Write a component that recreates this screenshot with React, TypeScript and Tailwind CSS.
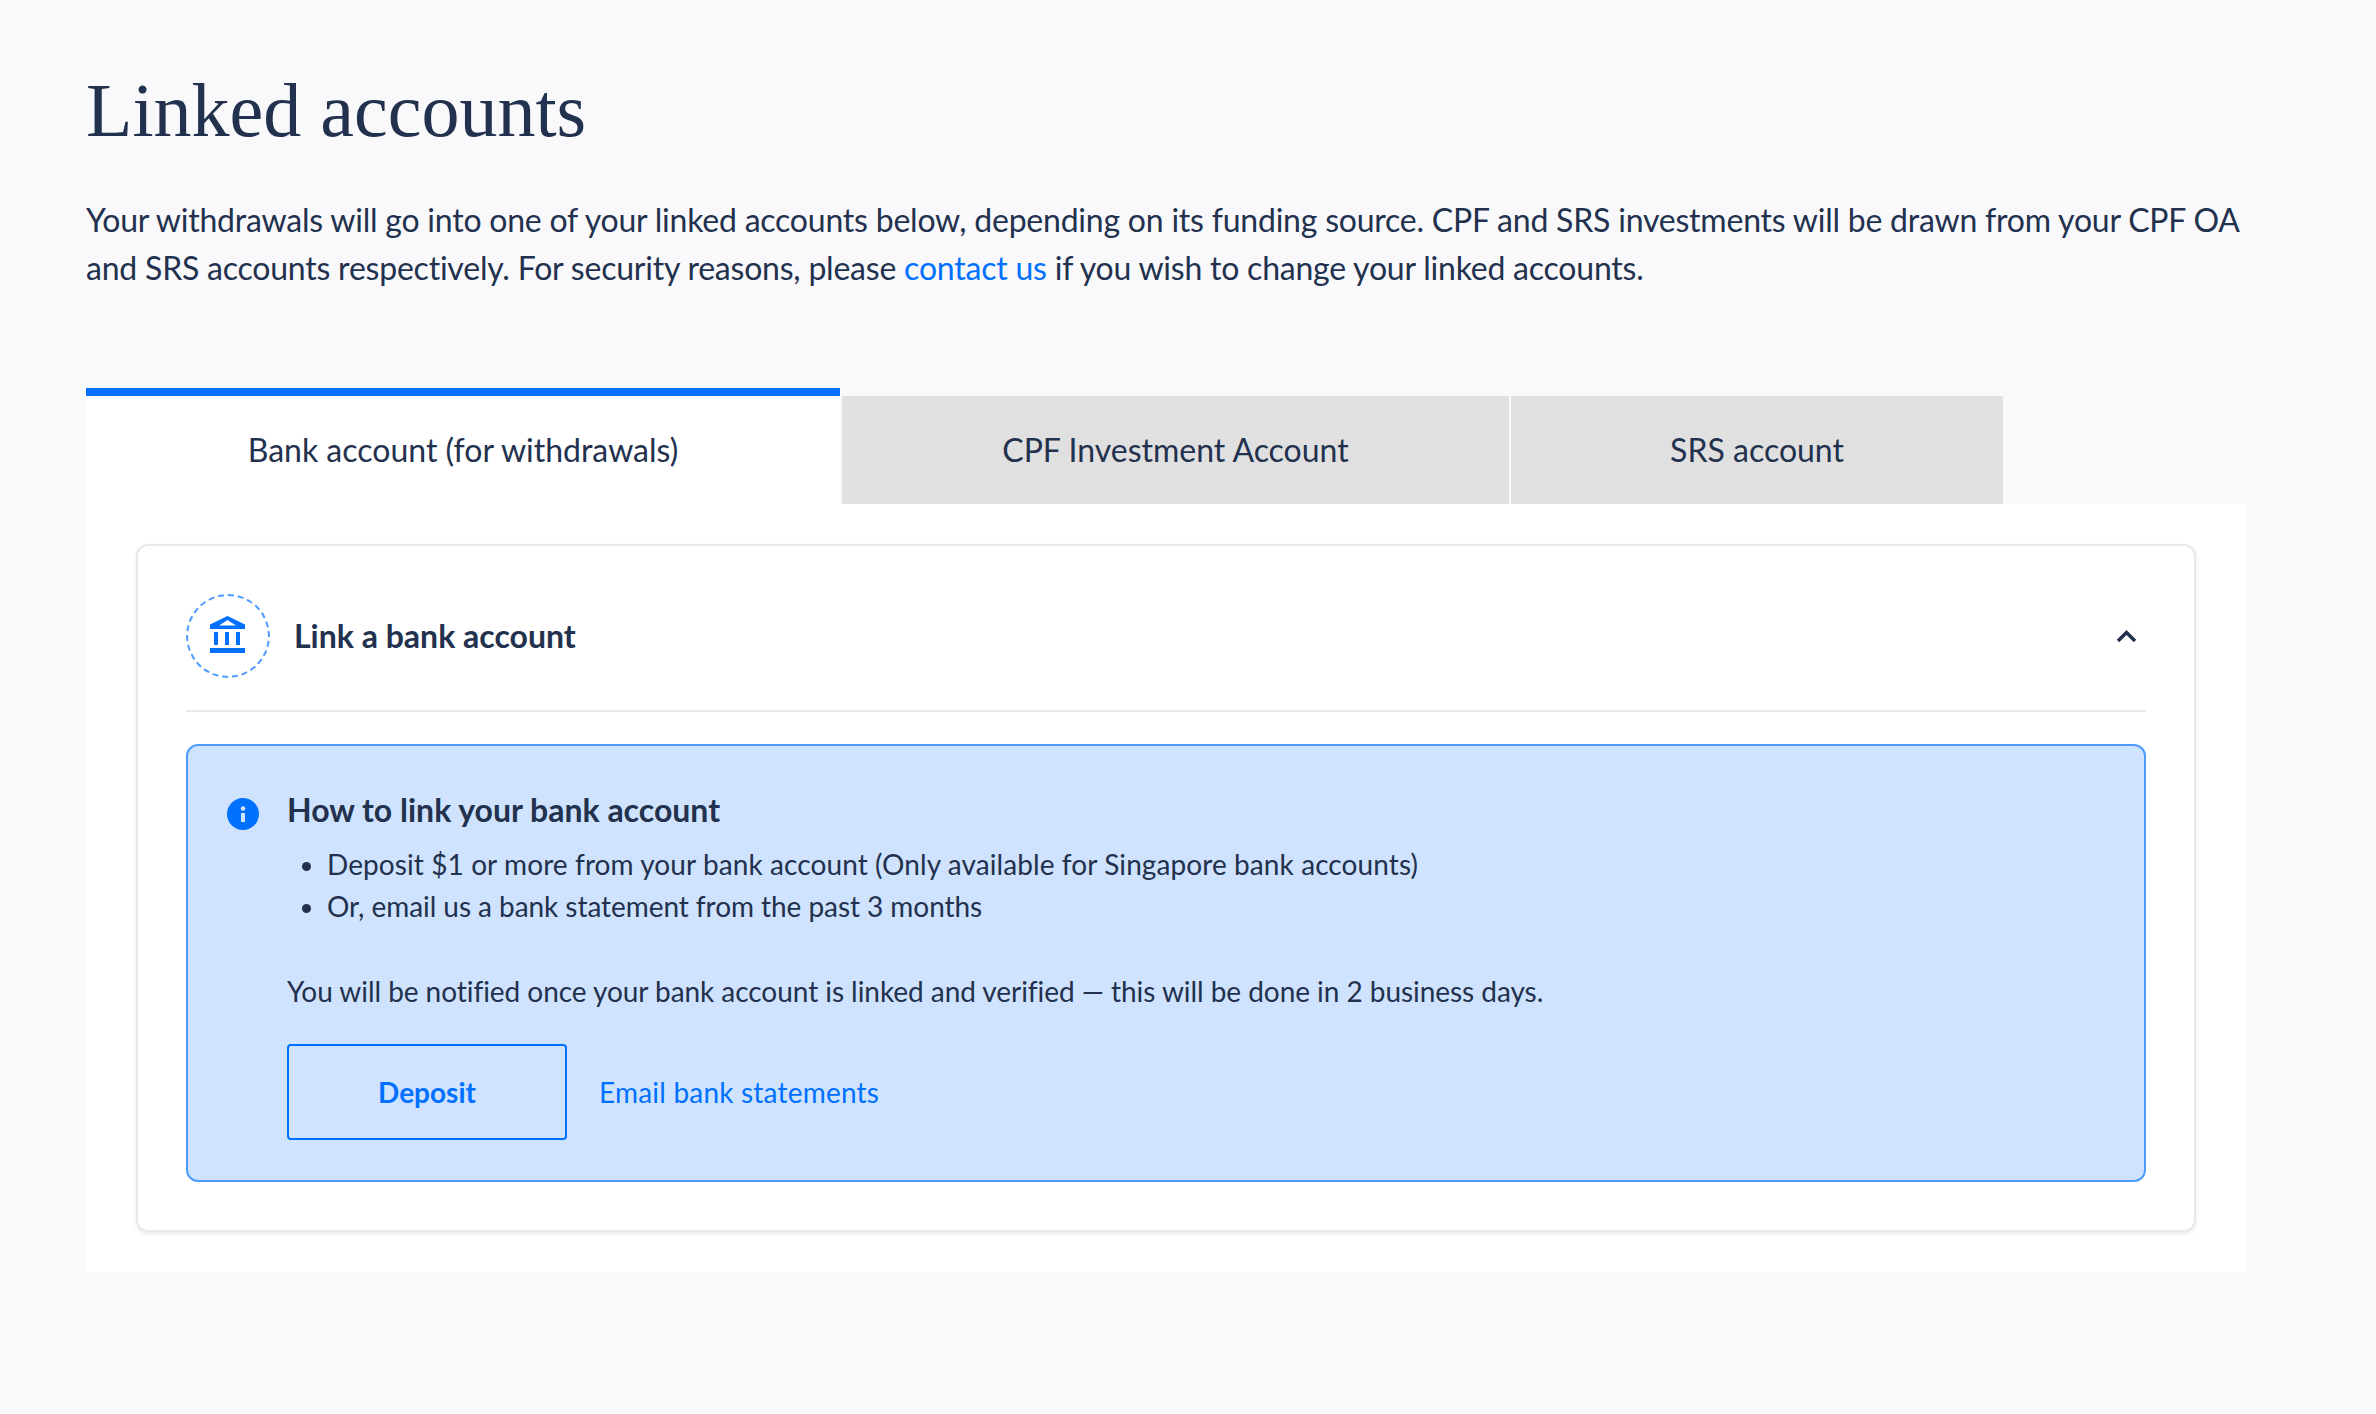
function BankIcon() {
  return (
    <div className="flex h-[84px] w-[84px] shrink-0 items-center justify-center rounded-full border-2 border-dashed border-[#4d9bff]">
      <svg width="35" height="37" viewBox="0 0 35 37" fill="#0070ff" className="mb-[3px] mr-[1px]">
        <path fillRule="evenodd" d="M17.500 0 35 8.500V13H0V8.500zM17.500 4 9 9.500h17z" />
        <path d="M4 16h4v13H4zM15 16h4v13h-4zM26 16h4v13h-4zM0 32h35v5H0z" />
      </svg>
    </div>
  );
}

function InfoIcon() {
  return (
    <svg width="32" height="32" viewBox="0 0 32 32" className="ml-[1px] mr-[28px] mt-[8px] shrink-0">
      <circle cx="16" cy="16" r="16" fill="#0070ff" />
      <circle cx="16" cy="10.500" r="2.300" fill="#cfe3fe" />
      <rect x="14" y="15" width="4" height="9" fill="#cfe3fe" />
    </svg>
  );
}

export default function App() {
  return (
    <div className="min-h-[1414px] bg-[#f9f9fc] px-[86px] pt-[62px] font-['Lato',sans-serif] text-[#22314d]">
      <h1 className="font-['Liberation_Serif',serif] text-[76px] leading-[96px]">Linked accounts</h1>
      <p className="mt-[38px] w-[2170px] text-[32px] leading-[48px] tracking-[-0.22px]">
        Your withdrawals will go into one of your linked accounts below, depending on its funding source. CPF and SRS
        investments will be drawn from your CPF OA and SRS accounts respectively. For security reasons, please{' '}
        <span className="text-[#0070ff]">contact us</span> if you wish to change your linked accounts.
      </p>

      <div className="mt-[96px] flex items-end text-[32px]">
        <div className="flex h-[116px] w-[754px] items-center justify-center border-t-[8px] border-[#0070ff] bg-white">
          Bank account (for withdrawals)
        </div>
        <div className="ml-[2px] flex h-[108px] w-[667px] items-center justify-center bg-[#e0e0e0]">
          CPF Investment Account
        </div>
        <div className="ml-[2px] flex h-[108px] w-[492px] items-center justify-center bg-[#e0e0e0]">SRS account</div>
      </div>

      <div className="w-[2160px] bg-white px-[50px] pb-[40px] pt-[40px]">
        <div className="rounded-xl border-2 border-[#e8e8ee] bg-white p-[48px] shadow-[0_2px_4px_rgba(0,0,0,0.08)]">
          <div className="flex items-center justify-between border-b-2 border-[#e8e8ee] pb-[32px]">
            <div className="flex items-center gap-[24px]">
              <BankIcon />
              <span className="text-[32px] font-bold">Link a bank account</span>
            </div>
            <svg width="19" height="12" viewBox="0 0 19 12" fill="none" stroke="#22314d" strokeWidth="3.500" className="mr-[10px]">
              <path d="M1 11 9.500 2.500 18 11" />
            </svg>
          </div>

          <div className="mt-[32px] flex rounded-xl border-2 border-[#4d9bff] bg-[#cfe3fe] px-[38px] pb-[40px] pt-[44px]">
            <InfoIcon />
            <div>
              <h2 className="text-[32px] font-bold leading-[40px]">How to link your bank account</h2>
              <ul className="mt-[13px] list-disc pl-[40px] text-[28px] leading-[42px]">
                <li className="tracking-[0.09px]">
                  Deposit $1 or more from your bank account (Only available for Singapore bank accounts)
                </li>
                <li className="tracking-[-0.06px]">Or, email us a bank statement from the past 3 months</li>
              </ul>
              <p className="mt-[43px] text-[28px] leading-[42px] tracking-[-0.05px]">
                You will be notified once your bank account is linked and verified — this will be done in 2 business days.
              </p>
              <div className="mt-[32px] flex items-center gap-[32px] text-[28px]">
                <div className="flex h-[96px] w-[280px] items-center justify-center rounded border-2 border-[#0070ff] font-bold text-[#0070ff]">
                  Deposit
                </div>
                <span className="tracking-[0.2px] text-[#0070ff]">Email bank statements</span>
              </div>
            </div>
          </div>
        </div>
      </div>
    </div>
  );
}
